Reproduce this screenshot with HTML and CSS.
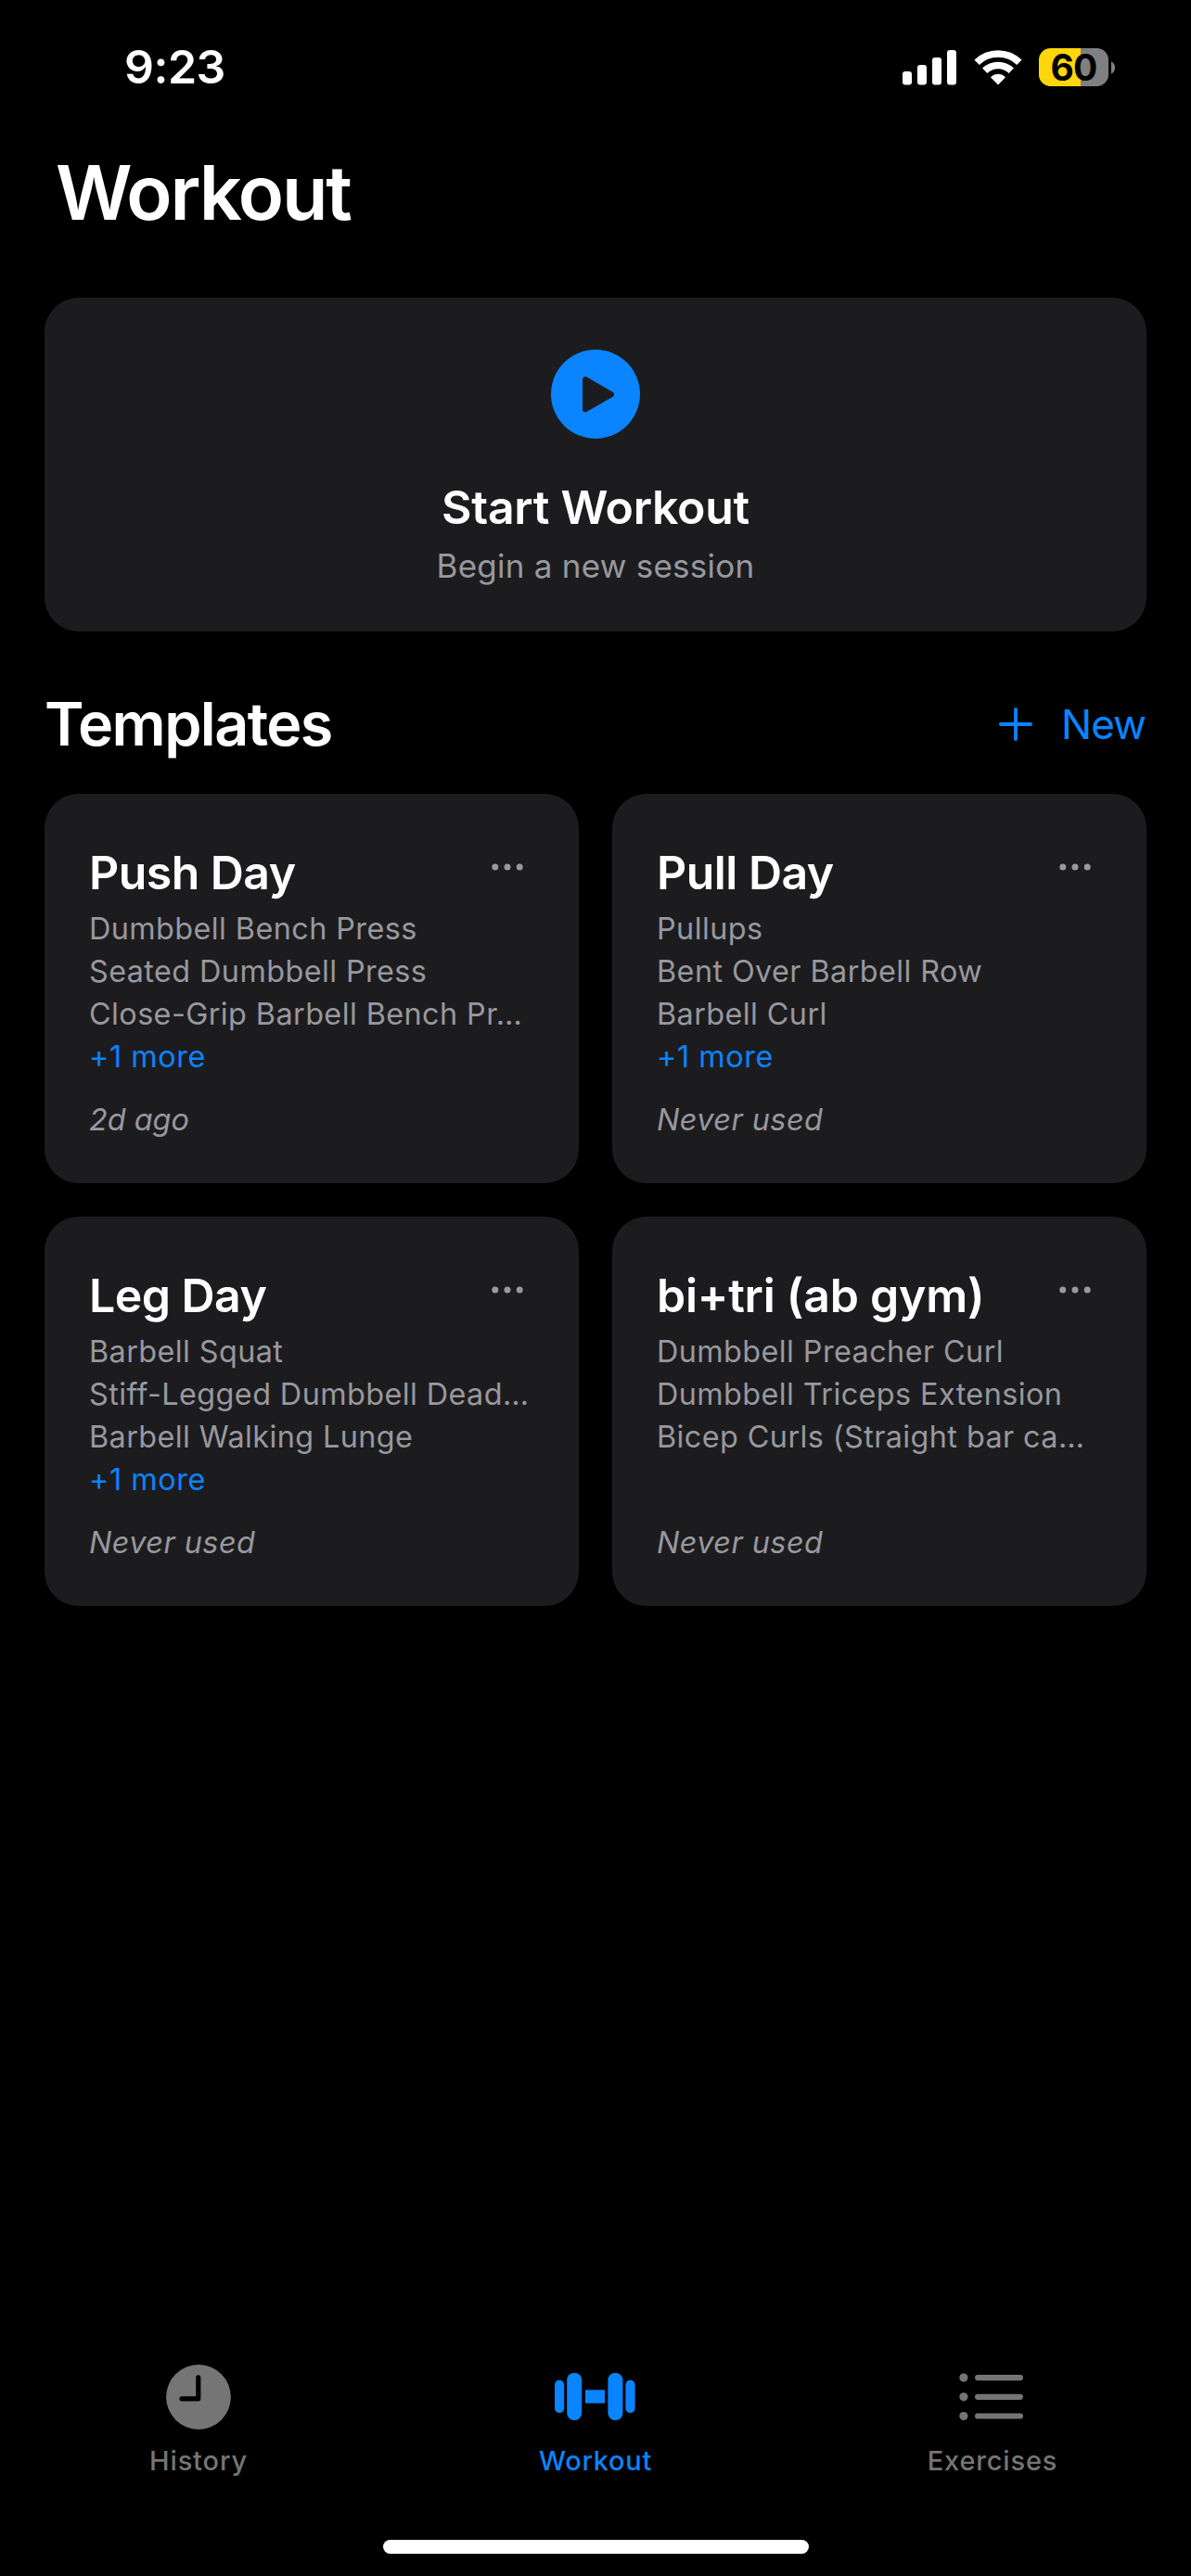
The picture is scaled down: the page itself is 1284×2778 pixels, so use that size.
FILE: index.html
```html
<!DOCTYPE html>
<html lang="en">
<head>
<meta charset="utf-8">
<title>Workout</title>
<link rel="stylesheet" href="styles.css">
</head>
<body>
<div class="app">
  <header class="status-bar">
    <span class="clock">9:23</span>
    <div class="indicators">
      <svg class="signal" width="58" height="38" viewBox="0 0 58 38" fill="#fff">
        <rect x="0" y="23" width="10" height="14.5" rx="3"/>
        <rect x="16" y="16" width="10" height="21.5" rx="3"/>
        <rect x="32" y="8" width="10" height="29.5" rx="3"/>
        <rect x="48" y="0" width="10" height="37.5" rx="3"/>
      </svg>
      <svg class="wifi" width="52" height="38" viewBox="0 0 52 38" fill="none" stroke="#fff" stroke-width="7.6">
        <path d="M3.1 13.3A33 33 0 0 1 48.9 13.3"/>
        <path d="M11.7 22.2A20.6 20.6 0 0 1 40.3 22.2"/>
        <path d="M26 36.5L18.9 29.3A10.4 10.4 0 0 1 33.1 29.3Z" fill="#fff" stroke-width="1.4" stroke-linejoin="round"/>
      </svg>
      <div class="battery"><div class="battery-body">60</div><svg width="5" height="14" viewBox="0 0 5 14"><path d="M0 0.5C5.4 2.5 5.4 11.5 0 13.5Z" fill="#808080"/></svg></div>
    </div>
  </header>

  <main class="content">
    <h1 class="page-title">Workout</h1>

    <section class="start-card">
      <svg width="96" height="96" viewBox="0 0 96 96">
        <circle cx="48" cy="48" r="48" fill="#0a84ff"/>
        <path d="M37 32.2V64.4L65 48.3Z" fill="#1c1c1e" stroke="#1c1c1e" stroke-width="6" stroke-linejoin="round"/>
      </svg>
      <h2 class="start-title">Start Workout</h2>
      <p class="start-sub">Begin a new session</p>
    </section>

    <div class="section-head">
      <h2 class="section-title">Templates</h2>
      <div class="new-button">
        <svg width="36" height="36" viewBox="0 0 36 36" stroke="#0a84ff" stroke-width="3.8" stroke-linecap="round"><path d="M18 1.9V34.1M1.9 18H34.1"/></svg>
        <span>New</span>
      </div>
    </div>

    <div class="grid">
      <article class="card">
        <div class="card-head"><h3 class="card-title">Push Day</h3>
          <svg class="more" width="34" height="8" viewBox="0 0 34 8"><circle cx="3.8" cy="4" r="3.5"/><circle cx="17" cy="4" r="3.5"/><circle cx="30.2" cy="4" r="3.5"/></svg></div>
        <ul class="exercises"><li>Dumbbell Bench Press</li><li>Seated Dumbbell Press</li><li>Close-Grip Barbell Bench Pr…</li><li class="extra">+1 more</li></ul>
        <p class="used ago">2d ago</p>
      </article>
      <article class="card">
        <div class="card-head"><h3 class="card-title">Pull Day</h3>
          <svg class="more" width="34" height="8" viewBox="0 0 34 8"><circle cx="3.8" cy="4" r="3.5"/><circle cx="17" cy="4" r="3.5"/><circle cx="30.2" cy="4" r="3.5"/></svg></div>
        <ul class="exercises"><li>Pullups</li><li>Bent Over Barbell Row</li><li>Barbell Curl</li><li class="extra">+1 more</li></ul>
        <p class="used">Never used</p>
      </article>
      <article class="card">
        <div class="card-head"><h3 class="card-title">Leg Day</h3>
          <svg class="more" width="34" height="8" viewBox="0 0 34 8"><circle cx="3.8" cy="4" r="3.5"/><circle cx="17" cy="4" r="3.5"/><circle cx="30.2" cy="4" r="3.5"/></svg></div>
        <ul class="exercises"><li>Barbell Squat</li><li>Stiff-Legged Dumbbell Dead…</li><li>Barbell Walking Lunge</li><li class="extra">+1 more</li></ul>
        <p class="used">Never used</p>
      </article>
      <article class="card">
        <div class="card-head"><h3 class="card-title wide">bi+tri (ab gym)</h3>
          <svg class="more" width="34" height="8" viewBox="0 0 34 8"><circle cx="3.8" cy="4" r="3.5"/><circle cx="17" cy="4" r="3.5"/><circle cx="30.2" cy="4" r="3.5"/></svg></div>
        <ul class="exercises"><li>Dumbbell Preacher Curl</li><li>Dumbbell Triceps Extension</li><li>Bicep Curls (Straight bar ca…</li></ul>
        <p class="used">Never used</p>
      </article>
    </div>
  </main>

  <nav class="tab-bar">
    <div class="tab">
      <svg width="70" height="70" viewBox="0 0 70 70"><circle cx="35" cy="35" r="34.9" fill="#757575"/><path d="M34.8 13.9V36.8H17" fill="none" stroke="#000" stroke-width="5.2" stroke-linecap="round" stroke-linejoin="round"/></svg>
      <span>History</span>
    </div>
    <div class="tab active">
      <svg width="88" height="70" viewBox="0 0 88 70" fill="#0a84ff">
        <rect x="0" y="16.7" width="10.2" height="35.6" rx="5.1"/>
        <rect x="13.2" y="9" width="16" height="51" rx="7.5"/>
        <rect x="33" y="27.3" width="21" height="14.4"/>
        <rect x="57.4" y="9" width="16" height="51" rx="7.5"/>
        <rect x="76.4" y="16.7" width="10.2" height="35.6" rx="5.1"/>
      </svg>
      <span>Workout</span>
    </div>
    <div class="tab">
      <svg width="70" height="70" viewBox="0 0 70 70" fill="#757575">
        <circle cx="3.9" cy="14.1" r="4.6"/><circle cx="3.9" cy="34.8" r="4.6"/><circle cx="3.9" cy="55.5" r="4.6"/>
        <rect x="16" y="11" width="52" height="6.2" rx="3.1"/><rect x="16" y="31.7" width="52" height="6.2" rx="3.1"/><rect x="16" y="52.4" width="52" height="6.2" rx="3.1"/>
      </svg>
      <span>Exercises</span>
    </div>
  </nav>
  <div class="home-indicator"></div>
</div>
</body>
</html>
```
FILE: styles.css
```css
* { box-sizing: border-box; margin: 0; padding: 0; }
body { background: #000; color: #fff; font-family: Inter, "Liberation Sans", sans-serif; }
svg { display: block; flex: none; overflow: visible; }
.app { display: flex; flex-direction: column; width: 1284px; height: 2778px; }

/* Status bar */
.status-bar { display: flex; justify-content: space-between; align-items: flex-start; height: 158px; padding: 42px 81px 0 134px; }
.clock { font-size: 50px; line-height: 60px; font-weight: 600; letter-spacing: -0.5px; }
.indicators { display: flex; align-items: center; height: 61px; }
.wifi { margin-left: 18.5px; }
.battery { display: flex; align-items: center; gap: 3px; margin-left: 18.5px; }
.battery-body { width: 75px; height: 41px; border-radius: 12.5px; background: linear-gradient(90deg, #ffd60a 60%, #808080 60%); color: #000; font-size: 39px; line-height: 41px; font-weight: 650; letter-spacing: -0.7px; text-align: center; }

/* Page */
.content { flex: 1; padding: 0 48px; }
.page-title { margin-left: 12px; font-size: 81px; line-height: 100px; font-weight: 600; letter-spacing: -2.2px; }
.start-card { display: flex; flex-direction: column; align-items: center; height: 360px; margin-top: 63px; padding-top: 56px; border-radius: 37px; background: #1c1c1e; }
.start-title { margin-top: 44px; font-size: 50px; line-height: 60px; font-weight: 600; letter-spacing: -0.3px; }
.start-sub { margin-top: 11px; font-size: 35px; line-height: 44px; letter-spacing: 0.25px; color: #98989f; }

.section-head { display: flex; align-items: center; justify-content: space-between; height: 80px; margin: 60px 0 35px; }
.section-title { font-size: 64.6px; line-height: 80px; font-weight: 600; letter-spacing: -1.6px; }
.new-button { display: flex; align-items: center; gap: 31px; padding-right: 1px; font-size: 44px; line-height: 54px; letter-spacing: -1px; color: #0a84ff; }

/* Template cards */
.grid { display: grid; grid-template-columns: 1fr 1fr; gap: 36px; }
.card { height: 420px; padding: 55px 48px 0; border-radius: 37px; background: #1c1c1e; }
.card-head { display: flex; justify-content: space-between; align-items: flex-start; }
.card-title { font-size: 50px; line-height: 60px; font-weight: 600; letter-spacing: -0.55px; }
.card-title.wide { letter-spacing: -0.25px; }
.more { margin: 19.5px 12.5px 0 0; fill: #98989f; }
.exercises { min-height: 184px; margin-top: 8px; list-style: none; font-size: 32.4px; line-height: 46px; letter-spacing: 0.4px; color: #98989f; white-space: nowrap; }
.exercises .extra { color: #0a84ff; letter-spacing: 0.55px; }
.used { margin-top: 22px; font-size: 32.4px; line-height: 46px; font-style: italic; letter-spacing: 0.46px; color: #98989f; }
.used.ago { letter-spacing: 0; }

/* Tab bar */
.tab-bar { display: grid; grid-template-columns: repeat(3, 1fr); height: 189px; }
.tab { display: flex; flex-direction: column; align-items: center; gap: 16px; color: #757575; font-size: 29px; line-height: 36px; font-weight: 500; letter-spacing: 0.85px; }
.tab.active { color: #0a84ff; letter-spacing: 0.7px; }
.home-indicator { width: 459px; height: 15px; margin: 0 auto 24px; border-radius: 8px; background: #fff; }
```
